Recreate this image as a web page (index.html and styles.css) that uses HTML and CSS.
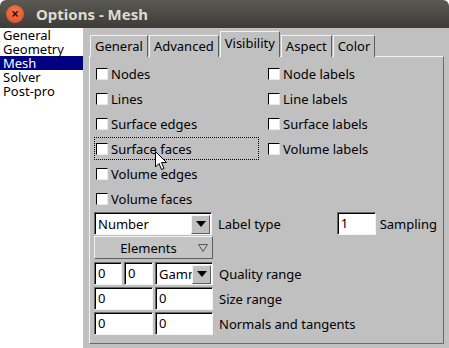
FILE: index.html
```html
<!DOCTYPE html>
<html>

<head>
    <title>Options - Mesh</title>
    <link rel="stylesheet" href="styles.css">
</head>

<body>
    <div class="window">
        <div class="titlebar">
            <span class="close-btn">&times;</span>
            <span class="title">Options - Mesh</span>
        </div>

        <div class="content">
            <ul class="categories">
                <li>General</li>
                <li>Geometry</li>
                <li class="selected">Mesh</li>
                <li>Solver</li>
                <li>Post-pro</li>
            </ul>

            <div class="tabs">
                <div class="tab-bar">
                    <div class="tab">General</div>
                    <div class="tab">Advanced</div>
                    <div class="tab active">Visibility</div>
                    <div class="tab">Aspect</div>
                    <div class="tab">Color</div>
                </div>

                <div class="panel">
                    <div class="checks">
                        <label class="check"><span class="box"></span>Nodes</label>
                        <label class="check"><span class="box"></span>Node labels</label>
                        <label class="check"><span class="box"></span>Lines</label>
                        <label class="check"><span class="box"></span>Line labels</label>
                        <label class="check"><span class="box"></span>Surface edges</label>
                        <label class="check"><span class="box"></span>Surface labels</label>
                        <label class="check focused"><span class="box"></span>Surface faces</label>
                        <label class="check"><span class="box"></span>Volume labels</label>
                        <label class="check"><span class="box"></span>Volume edges</label>
                        <span></span>
                        <label class="check"><span class="box"></span>Volume faces</label>
                        <span></span>
                    </div>

                    <div class="field-row first">
                        <div class="choice wide">
                            <span class="choice-text">Number</span>
                            <span class="choice-btn"><span class="arrow"></span></span>
                        </div>
                        <span class="field-label">Label type</span>
                        <div class="sampling">
                            <span class="input num">1</span>
                            <span class="field-label">Sampling</span>
                        </div>
                    </div>

                    <div class="menu-btn">
                        <span class="menu-text">Elements</span>
                        <svg width="10" height="8" viewBox="0 0 10 8">
                            <polygon points="0.5,0.5 9.5,0.5 5,7.5" fill="none" stroke="#555" stroke-width="1" />
                        </svg>
                    </div>

                    <div class="field-row quality">
                        <span class="input small">0</span>
                        <span class="input small2">0</span>
                        <div class="choice narrow">
                            <span class="choice-text">Gamma</span>
                            <span class="choice-btn"><span class="arrow"></span></span>
                        </div>
                        <span class="field-label">Quality range</span>
                    </div>

                    <div class="field-row">
                        <span class="input half">0</span>
                        <span class="input half2">0</span>
                        <span class="field-label">Size range</span>
                    </div>

                    <div class="field-row">
                        <span class="input half">0</span>
                        <span class="input half2">0</span>
                        <span class="field-label">Normals and tangents</span>
                    </div>
                </div>
            </div>
        </div>
    </div>

    <svg class="cursor" width="13" height="20" viewBox="0 0 13 20">
        <path d="M0.5,0.5 L0.5,16 L4,12.5 L6.5,18.5 L9,17.5 L6.5,11.5 L11.5,11.5 Z" fill="#fff" stroke="#000" stroke-width="1" stroke-linejoin="round" />
    </svg>
</body>

</html>
```

FILE: styles.css
```css
body {
    margin: 0;
    padding: 0;
    background: #ffffff;
    font-family: "Noto Sans", "DejaVu Sans", sans-serif;
    font-size: 13px;
    color: #000;
}

.window {
    width: 449px;
    height: 348px;
    display: flex;
    flex-direction: column;
}

.titlebar {
    height: 28px;
    flex-shrink: 0;
    display: flex;
    align-items: center;
    padding-left: 6px;
    background: linear-gradient(#5a5954, #3d3c38);
    border-radius: 6px 6px 0 0;
}

.close-btn {
    width: 18px;
    height: 18px;
    border-radius: 50%;
    background: radial-gradient(circle at 50% 40%, #f47a52, #de4b1e);
    color: #3b1408;
    font-size: 14px;
    line-height: 17px;
    text-align: center;
    font-weight: bold;
}

.title {
    margin-left: 12px;
    color: #dfdbd2;
    font-weight: bold;
    font-size: 15px;
}

.content {
    flex: 1;
    display: flex;
    background: #c0c0c0;
}

.categories {
    width: 83px;
    margin: 0;
    padding: 0;
    list-style: none;
    background: #ffffff;
}

.categories li {
    height: 14px;
    line-height: 14px;
    padding-left: 3px;
}

.categories .selected {
    background: #000080;
    color: #ffffff;
}

.tabs {
    flex: 1;
    display: flex;
    flex-direction: column;
    padding: 4px 5px 4px 6px;
}

.tab-bar {
    display: flex;
    align-items: flex-end;
    height: 25px;
    padding-left: 1px;
    gap: 1px;
    margin-bottom: -1px;
    position: relative;
    z-index: 1;
}

.tab {
    height: 21px;
    line-height: 20px;
    padding: 0 4px;
    border: 1px solid;
    border-color: #f2f2f2 #5e5e5e transparent #f2f2f2;
    border-bottom: none;
    background: #c0c0c0;
}

.tab.active {
    height: 25px;
    line-height: 22px;
}

.panel {
    flex: 1;
    border: 1px solid;
    border-color: #f2f2f2 #6a6a6a #6a6a6a #f2f2f2;
    padding: 5px 4px;
}

.checks {
    display: grid;
    grid-template-columns: 165px 165px;
    grid-auto-rows: 23px;
    column-gap: 7px;
    row-gap: 2px;
}

.check {
    display: flex;
    align-items: center;
    padding-left: 2px;
}

.check.focused {
    outline: 1px dotted #000;
    outline-offset: -1px;
}

.box {
    width: 10px;
    height: 10px;
    margin-right: 3px;
    background: #ffffff;
    border: 1px solid;
    border-color: #000 #e8e8e8 #e8e8e8 #000;
}

.field-row {
    display: flex;
    align-items: center;
    height: 23px;
    margin-top: 2px;
    gap: 2px;
}

.field-row.quality {
    margin-top: 3px;
}

.field-label {
    margin-left: 4px;
}

.input,
.choice {
    box-sizing: border-box;
    height: 23px;
    background: #ffffff;
    border: 1px solid;
    border-color: #6a6a6a #f4f4f4 #f4f4f4 #6a6a6a;
    box-shadow: inset 1px 1px 0 #000;
    line-height: 21px;
    padding-left: 3px;
}

.input.small {
    width: 28px;
}

.input.small2 {
    width: 29px;
}

.input.half {
    width: 59px;
}

.input.half2 {
    width: 58px;
}

.choice {
    display: flex;
    align-items: center;
    overflow: hidden;
    padding-right: 1px;
}

.choice.wide {
    width: 118px;
}

.choice.narrow {
    width: 58px;
}

.choice-text {
    flex: 1;
    overflow: hidden;
    white-space: nowrap;
    padding-top: 1px;
}

.choice-btn {
    width: 17px;
    height: 17px;
    flex-shrink: 0;
    margin-top: 1px;
    display: flex;
    align-items: center;
    justify-content: center;
    background: #c0c0c0;
    border: 1px solid;
    border-color: #f2f2f2 #5e5e5e #5e5e5e #f2f2f2;
}

.arrow {
    width: 0;
    height: 0;
    border-left: 5px solid transparent;
    border-right: 5px solid transparent;
    border-top: 6px solid #000;
}

.sampling {
    margin-left: auto;
    margin-right: 2px;
    display: flex;
    align-items: center;
}

.input.num {
    width: 39px;
}

.menu-btn {
    box-sizing: border-box;
    width: 119px;
    height: 23px;
    margin-top: 1px;
    display: flex;
    align-items: center;
    padding-left: 4px;
    padding-right: 4px;
    border: 1px solid;
    border-color: #f2f2f2 #5e5e5e #5e5e5e #f2f2f2;
    background: #c4c4c4;
}

.menu-text {
    flex: 1;
    text-align: center;
}

.cursor {
    position: absolute;
    left: 155px;
    top: 151px;
}
```
